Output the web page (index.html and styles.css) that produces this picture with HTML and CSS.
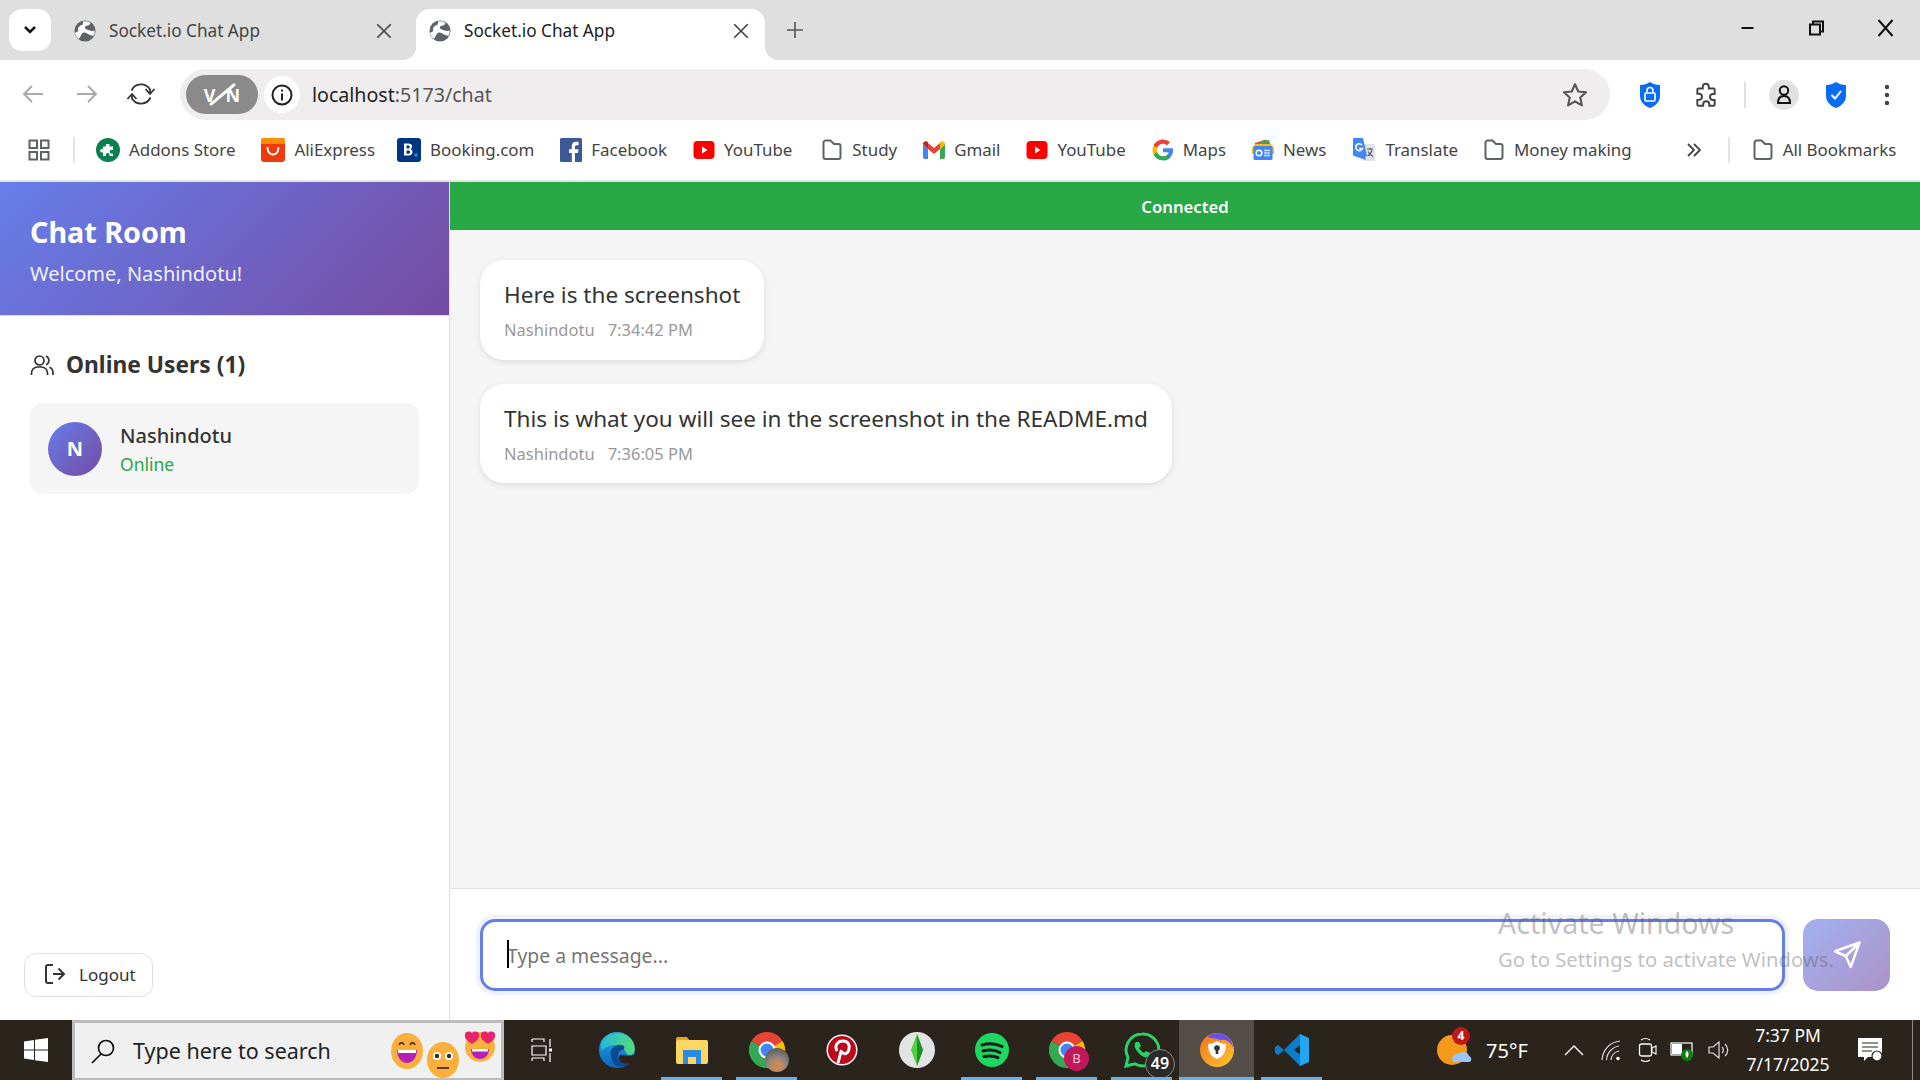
FILE: index.html
```html
<!DOCTYPE html>
<html lang="en">
<head>
<meta charset="utf-8">
<title>Socket.io Chat App</title>
<link rel="stylesheet" href="styles.css">
</head>
<body>
<svg class="defs" width="0" height="0" aria-hidden="true">
  <defs>
    <symbol id="globe" viewBox="0 0 24 24"><circle cx="12" cy="12" r="11.500" fill="#5f6368"/><path d="M10 1.500c4-.5 7 .5 8 2-1 3-5 2-6 4s3 3 5 4c2 .5 4 .5 5.500 0 0 2 0 4-1 5.500-3 1-6-2-9-3-3-1-4 1-5 3s-1 3-2.500 3.500C3 19 1.500 16.500 1 14c3-1 4-2 3.500-4S7 6 9.500 5z" fill="#fff"/></symbol>
    <symbol id="x" viewBox="0 0 16 16"><path d="M2 2l12 12M14 2L2 14" stroke="#444" stroke-width="1.500" fill="none"/></symbol>
    <symbol id="folder" viewBox="0 0 22 22"><path d="M2.500 3.500a2 2 0 0 1 2-2h5l3.500 3.500h4.500a2 2 0 0 1 2 2v11a2 2 0 0 1-2 2h-13a2 2 0 0 1-2-2z" fill="none" stroke="#5f6368" stroke-width="2"/></symbol>
    <symbol id="yt" viewBox="0 0 22 22"><rect x="0.500" y="2" width="21" height="18" rx="4" fill="#f00"/><path d="M9 7.500l5.500 3.500L9 14.500z" fill="#fff"/></symbol>
    <symbol id="chrome" viewBox="0 0 36 36"><path d="M18 18L2.400 9A18 18 0 0 1 33.600 9z" fill="#ea4335"/><path d="M18 18L33.600 9A18 18 0 0 1 18 36z" fill="#fbbc04"/><path d="M18 18L18 36A18 18 0 0 1 2.400 9z" fill="#34a853"/><circle cx="18" cy="18" r="8.500" fill="#fff"/><circle cx="18" cy="18" r="6.500" fill="#4285f4"/></symbol>
  </defs>
</svg>
<div class="browser">
  <header class="tabstrip">
    <div class="tabsearch"><svg width="14" height="10" viewBox="0 0 14 10"><path d="M2 2l5 5 5-5" stroke="#111" stroke-width="2.500" fill="none"/></svg></div>
    <div class="tab">
      <svg class="fav" width="22" height="22"><use href="#globe"/></svg>
      <span class="tabtitle">Socket.io Chat App</span>
      <svg class="tabx" width="18" height="18"><use href="#x"/></svg>
    </div>
    <div class="tab active">
      <svg class="fav" width="22" height="22"><use href="#globe"/></svg>
      <span class="tabtitle">Socket.io Chat App</span>
      <svg class="tabx" width="18" height="18"><use href="#x"/></svg>
    </div>
    <svg class="newtab" width="18" height="18" viewBox="0 0 18 18"><path d="M9 1v16M1 9h16" stroke="#555" stroke-width="1.600"/></svg>
    <div class="winctl">
      <svg width="69" height="20" viewBox="0 0 20 20"><path d="M4 10h12" stroke="#111" stroke-width="2"/></svg>
      <svg width="69" height="20" viewBox="0 0 20 20"><path d="M3.500 6.500h10v10h-10zM6.500 6.500v-3h10v10h-3" stroke="#111" stroke-width="2" fill="none"/></svg>
      <svg width="69" height="20" viewBox="0 0 20 20"><path d="M3 2l14 16M17 2L3 18" stroke="#111" stroke-width="2" fill="none"/></svg>
    </div>
  </header>

  <nav class="toolbar">
    <div class="navbtn"><svg width="24" height="24" viewBox="0 0 24 24"><path d="M22 12H3M11 4l-8 8 8 8" fill="none" stroke="#aaa" stroke-width="2"/></svg></div>
    <div class="navbtn"><svg width="24" height="24" viewBox="0 0 24 24"><path d="M2 12h19M13 4l8 8-8 8" fill="none" stroke="#aaa" stroke-width="2"/></svg></div>
    <div class="navbtn"><svg width="30" height="30" viewBox="0 0 30 30"><path d="M5.500 11.500A10.500 10.500 0 0 1 24 10.500V14M24.500 18.500A10.500 10.500 0 0 1 6 19.500V16" fill="none" stroke="#333" stroke-width="1.800"/><path d="M19.500 10l4.500 5 4.500-5M1.500 20l4.500-5 4.500 5" fill="none" stroke="#333" stroke-width="1.800"/></svg></div>
    <div class="omnibox">
      <div class="vpn"><span>V</span><span class="vpnslash"></span><span>N</span></div>
      <div class="info"><svg width="24" height="24" viewBox="0 0 24 24"><circle cx="12" cy="12" r="9.500" fill="none" stroke="#222" stroke-width="2"/><path d="M12 10.500v7M12 6.500v2" stroke="#222" stroke-width="2"/></svg></div>
      <div class="url"><span class="host">localhost</span>:5173/chat</div>
      <svg class="star" width="28" height="28" viewBox="0 0 24 24"><path d="M12 2.800l2.800 6.200 6.700.7-5 4.500 1.400 6.700-5.900-3.400-5.900 3.400 1.400-6.700-5-4.500 6.700-.7z" fill="none" stroke="#555" stroke-width="1.800" stroke-linejoin="round"/></svg>
    </div>
    <div class="exts">
      <svg class="ext-shield" width="24" height="28" viewBox="0 0 24 28"><path d="M12 1c3 2 6 3 10 3v11c0 6-5 10-10 12C7 25 2 21 2 15V4c4 0 7-1 10-3z" fill="#0a6cf5"/><rect x="7" y="12" width="10" height="8" rx="1" fill="none" stroke="#fff" stroke-width="1.600"/><path d="M9 12V9.500a3 3 0 0 1 6 0V12" fill="none" stroke="#fff" stroke-width="1.600"/></svg>
      <svg class="ext-puzzle" width="26" height="26" viewBox="0 0 24 24"><path d="M9 4.500a2.800 2.800 0 0 1 5.600 0V6H19a1 1 0 0 1 1 1v4h-1.500a2.800 2.800 0 0 0 0 5.600H20V21a1 1 0 0 1-1 1h-4v-1.500a2.800 2.800 0 0 0-5.600 0V22H5a1 1 0 0 1-1-1v-4.500h1.500a2.800 2.800 0 0 0 0-5.600H4V7a1 1 0 0 1 1-1h4z" fill="none" stroke="#444" stroke-width="1.800"/></svg>
      <span class="vsep"></span>
      <div class="profile"><svg width="16" height="20" viewBox="0 0 16 20"><circle cx="8" cy="5.500" r="4.200" fill="none" stroke="#111" stroke-width="2"/><path d="M2 18c0-5 2.500-7 6-7s6 2 6 7z" fill="none" stroke="#111" stroke-width="2"/></svg></div>
      <svg class="ext-check" width="24" height="28" viewBox="0 0 24 28"><path d="M12 1c3 2 6 3 10 3v11c0 6-5 10-10 12C7 25 2 21 2 15V4c4 0 7-1 10-3z" fill="#0a6cf5"/><path d="M7.500 14l3.500 3.500 6-7.500" fill="none" stroke="#fff" stroke-width="2"/></svg>
      <svg class="ext-menu" width="6" height="22" viewBox="0 0 6 22"><circle cx="3" cy="3" r="2.200" fill="#444"/><circle cx="3" cy="11" r="2.200" fill="#444"/><circle cx="3" cy="19" r="2.200" fill="#444"/></svg>
    </div>
  </nav>

  <div class="bookmarks">
    <svg class="apps" width="22" height="22" viewBox="0 0 22 22"><path d="M1.500 1.500h7.500v7.500H1.500zM13 1.500h7.500v7.500H13zM1.500 13h7.500v7.500H1.500zM13 13h7.500v7.500H13z" fill="none" stroke="#5f6368" stroke-width="2"/></svg>
    <span class="bsep"></span>
    <div class="bm bm-addons"><svg width="24" height="24" viewBox="0 0 24 24"><circle cx="12" cy="12" r="12" fill="#0b7f50"/><path d="M10 6h3.500v2.500H17V12h-2a1.800 1.800 0 0 0 0 3.500h2V18h-3.500v-1.500a1.800 1.800 0 0 0-3.500 0V18H7v-3.500H5.500a1.800 1.800 0 0 1 0-3.500H7V8.500h3z" fill="#fff"/></svg><span>Addons Store</span></div>
    <div class="bm bm-ali"><svg width="24" height="24" viewBox="0 0 24 24"><rect width="24" height="24" rx="3" fill="#ee3a0c"/><path d="M0 3a3 3 0 0 1 3-3h18a3 3 0 0 1 3 3v3H0z" fill="#ff8c00"/><path d="M6.500 9c0 5 2.500 7.500 5.500 7.500s5.500-2.500 5.500-7.500" fill="none" stroke="#fff" stroke-width="2"/></svg><span>AliExpress</span></div>
    <div class="bm bm-booking"><svg width="24" height="24" viewBox="0 0 24 24"><rect width="24" height="24" rx="3" fill="#003580"/><path d="M7 5.500h4.500c2.500 0 3.500 1.200 3.500 3 0 1.300-.7 2.200-1.700 2.600 1.300.4 2.200 1.400 2.200 2.900 0 2.200-1.600 3.500-4 3.500H7zm2.500 2v3h1.800c1 0 1.400-.6 1.400-1.500s-.5-1.500-1.400-1.500zm0 5v3.300h2c1.100 0 1.600-.7 1.600-1.700s-.6-1.600-1.600-1.600z" fill="#fff"/><circle cx="19" cy="17" r="1.700" fill="#09f"/></svg><span>Booking.com</span></div>
    <div class="bm bm-fb"><svg width="22" height="24" viewBox="0 0 22 24"><rect width="22" height="24" rx="1.500" fill="#3b5998"/><path d="M15 24v-9h3l.5-3.800H15V9c0-1.100.4-1.800 1.900-1.800h1.700V3.800c-.4 0-1.400-.1-2.500-.1-2.600 0-4.300 1.500-4.300 4.400v3.100H9V15h2.800v9z" fill="#fff"/></svg><span>Facebook</span></div>
    <div class="bm bm-yt1"><svg width="22" height="22"><use href="#yt"/></svg><span>YouTube</span></div>
    <div class="bm bm-study"><svg width="22" height="22"><use href="#folder"/></svg><span>Study</span></div>
    <div class="bm bm-gmail"><svg width="22" height="18" viewBox="0 0 22 18"><path d="M0 3v13a2 2 0 0 0 2 2h3V8z" fill="#4285f4"/><path d="M22 3v13a2 2 0 0 1-2 2h-3V8z" fill="#34a853"/><path d="M5 8v-6l6 5 6-5v6l-6 5z" fill="#ea4335"/><path d="M0 3c0-2.500 3-3.500 5-2v7z" fill="#c5221f"/><path d="M22 3c0-2.500-3-3.500-5-2v7z" fill="#fbbc04"/></svg><span>Gmail</span></div>
    <div class="bm bm-yt2"><svg width="22" height="22"><use href="#yt"/></svg><span>YouTube</span></div>
    <div class="bm bm-maps"><svg width="22" height="22" viewBox="0 0 24 24"><path d="M23 12.300c0-.8-.1-1.600-.2-2.300H12v4.400h6.200c-.3 1.400-1.100 2.600-2.300 3.400v2.800h3.700c2.100-2 3.400-4.900 3.400-8.300z" fill="#4285f4"/><path d="M12 23.500c3.100 0 5.700-1 7.600-2.800l-3.700-2.900c-1 .7-2.300 1.100-3.900 1.100-3 0-5.500-2-6.400-4.700H1.700V17c1.900 3.900 5.800 6.500 10.300 6.500z" fill="#34a853"/><path d="M5.600 14.200a6.900 6.900 0 0 1 0-4.400V6.900H1.700a11.500 11.500 0 0 0 0 10.200z" fill="#fbbc04"/><path d="M12 5.100c1.700 0 3.200.6 4.400 1.700l3.300-3.300A11 11 0 0 0 12 .5C7.500.5 3.600 3.100 1.700 6.900l3.900 2.900C6.500 7.100 9 5.100 12 5.100z" fill="#ea4335"/></svg><span>Maps</span></div>
    <div class="bm bm-news"><svg width="22" height="22" viewBox="0 0 22 22"><path d="M3 4l11-3.500 2 5H3z" fill="#ea4335"/><path d="M7 3l10-2 2 6H7z" fill="#34a853"/><path d="M0 9l3-4 16 0 3 4v6H0z" fill="#fbbc04"/><rect x="1.500" y="7" width="19" height="14" rx="1.500" fill="#4285f4"/><circle cx="7" cy="14" r="2.800" fill="none" stroke="#fff" stroke-width="1.500"/><path d="M12 11.500h6M12 14h6M12 16.500h6" stroke="#cfe2ff" stroke-width="1.300"/></svg><span>News</span></div>
    <div class="bm bm-translate"><svg width="24" height="24" viewBox="0 0 24 24"><rect x="11" y="6" width="12" height="17" rx="1" fill="#dfe2e6"/><path d="M15 11h6M18 10v2M20 12c-.8 3-2.500 5-4.500 6M16 13.500c1 2 3 4 5 5" fill="none" stroke="#5f6368" stroke-width="1.200"/><path d="M2 0h9l4 18-2 1 1 3-12-4a1.500 1.500 0 0 1-1-1.500V1.500A1.500 1.500 0 0 1 2 0z" fill="#4285f4"/><path d="M10 7a3.500 3.500 0 1 0 .5 3.500H7" fill="none" stroke="#fff" stroke-width="1.600"/></svg><span>Translate</span></div>
    <div class="bm bm-money"><svg width="22" height="22"><use href="#folder"/></svg><span>Money making</span></div>
    <svg class="more" width="18" height="16" viewBox="0 0 18 16"><path d="M3 2l6 6-6 6M9 2l6 6-6 6" fill="none" stroke="#444" stroke-width="1.800"/></svg>
    <span class="bsep right"></span>
    <div class="bm bm-all"><svg width="22" height="22"><use href="#folder"/></svg><span>All Bookmarks</span></div>
  </div>

  <main class="app">
    <aside class="sidebar">
      <div class="side-head">
        <h1>Chat Room</h1>
        <p>Welcome, Nashindotu!</p>
      </div>
      <section class="users">
        <h2><svg width="24" height="24" viewBox="0 0 24 24"><circle cx="9.500" cy="7.500" r="4.500" fill="none" stroke="#333" stroke-width="1.700"/><path d="M1.500 22v-2a6 6 0 0 1 6-6h4a6 6 0 0 1 6 6v2M16 3.300a4.500 4.500 0 0 1 0 8.400M19.500 14.300a6 6 0 0 1 3.500 5.700v2" fill="none" stroke="#333" stroke-width="1.700"/></svg>Online Users (1)</h2>
        <div class="user">
          <div class="avatar">N</div>
          <div class="uinfo"><div class="uname">Nashindotu</div><div class="ustatus">Online</div></div>
        </div>
      </section>
      <button class="logout"><svg width="24" height="24" viewBox="0 0 24 24"><path d="M10 3H5a2 2 0 0 0-2 2v14a2 2 0 0 0 2 2h5M10 12h11M15.500 6.500l5.500 5.500-5.500 5.500" fill="none" stroke="#333" stroke-width="2"/></svg>Logout</button>
    </aside>
    <section class="chat">
      <div class="status">Connected</div>
      <div class="messages">
        <article class="msg">
          <div class="text">Here is the screenshot</div>
          <div class="meta"><span>Nashindotu</span><span>7:34:42 PM</span></div>
        </article>
        <article class="msg">
          <div class="text">This is what you will see in the screenshot in the README.md</div>
          <div class="meta"><span>Nashindotu</span><span>7:36:05 PM</span></div>
        </article>
      </div>
      <form class="composer">
        <div class="input"><span class="caret"></span><span>Type a message...</span></div>
        <div class="send"><svg width="30" height="30" viewBox="0 0 24 24"><path d="M22 2L15 21.500 11 13 2.500 9zM22 2L11 13" fill="none" stroke="#fff" stroke-width="2" stroke-linejoin="round"/></svg></div>
      </form>
      <div class="activate"><div class="a1">Activate Windows</div><div class="a2">Go to Settings to activate Windows.</div></div>
    </section>
  </main>

  <footer class="taskbar">
    <div class="start"><svg width="24" height="24" viewBox="0 0 24 24"><path d="M0 3.500l10-1.500v9.500H0zM11 1.800L24 0v11.500H11zM0 12.500h10V22L0 20.500zM11 12.500h13V24l-13-1.800z" fill="#fff"/></svg></div>
    <div class="search">
      <svg width="26" height="26" viewBox="0 0 26 26"><circle cx="16" cy="10" r="7.500" fill="none" stroke="#111" stroke-width="1.700"/><path d="M11 16L2 25" stroke="#111" stroke-width="1.700"/></svg>
      <span class="stext">Type here to search</span>
      <div class="emojis">
        <svg class="e1" width="32" height="36" viewBox="0 0 32 36"><ellipse cx="16" cy="18" rx="16" ry="18" fill="#fbb03b"/><path d="M8 12c1-3 4-3 5 0M19 12c1-3 4-3 5 0" fill="none" stroke="#5a3a2a" stroke-width="1.800"/><path d="M6 17h20c0 8-5 13-10 13S6 25 6 17z" fill="#b81fb8"/><path d="M7 17h18v3H7z" fill="#fff"/></svg>
        <svg class="e2" width="32" height="36" viewBox="0 0 32 36"><ellipse cx="16" cy="18" rx="16" ry="18" fill="#fbb03b"/><circle cx="10" cy="14" r="4" fill="#fff"/><circle cx="22" cy="14" r="4" fill="#fff"/><circle cx="10" cy="14" r="2.200" fill="#3a2a20"/><circle cx="22" cy="14" r="2.200" fill="#3a2a20"/><path d="M10 26h12" stroke="#5a3a2a" stroke-width="2"/></svg>
        <svg class="e3" width="32" height="32" viewBox="0 0 32 32"><circle cx="16" cy="17" r="15" fill="#fbb03b"/><path d="M7 19h18c0 6-4 10-9 10s-9-4-9-10z" fill="#b81fb8"/><path d="M8 19h16v2.500H8z" fill="#fff"/><path d="M8 14C3 11 0 8 1 4c1-3 5-3 7-1 2-2 6-2 7 1 1 4-2 7-7 10zM24 14c-5-3-8-6-7-10 1-3 5-3 7-1 2-2 6-2 7 1 1 4-2 7-7 10z" fill="#e8246a"/></svg>
      </div>
    </div>
    <div class="taskview"><svg width="24" height="26" viewBox="0 0 24 24"><path d="M2 1h12v3M2 4V1M2 8h14v9H2zM2 20h12v3M2 23v-3M20 1v8M20 15v9" fill="none" stroke="#fff" stroke-width="1.200"/><rect x="19" y="10.500" width="3" height="3" fill="#fff"/></svg></div>
    <div class="task"><svg width="36" height="36" viewBox="0 0 36 36"><defs><linearGradient id="edgeA" x1="0" y1="0" x2="0" y2="1"><stop offset="0" stop-color="#22a6e6"/><stop offset="1" stop-color="#0c66b8"/></linearGradient><linearGradient id="edgeB" x1="0" y1="0" x2="1" y2="0"><stop offset="0" stop-color="#27b6dc"/><stop offset="1" stop-color="#55dd78"/></linearGradient></defs><circle cx="18" cy="18" r="18" fill="url(#edgeA)"/><path d="M2.500 9C8 0 27-3 34 10c3 6 2 13-3 13-6 0-4-10-14-10-7 0-12 3-14.500 6-1-3-1-7 0-10z" fill="url(#edgeB)"/><path d="M12 24c-2-6 3-11 9-11 4 0 5 2 4 4-2 1-6 2-6 7 0 5 6 9 11 7-5 5-13 4-15 1-2-2-2-5-3-8z" fill="#0b4a8f"/><path d="M36 22c-3 2-8 2-12 1-3-1-5 1-4 4 1 4 7 6 11 4 3-2 5-5 5-9z" fill="#2a241c"/></svg></div>
    <div class="task open"><svg width="32" height="27" viewBox="0 0 32 27"><path d="M0 2a2 2 0 0 1 2-2h9l3 4H0z" fill="#e6a51e"/><rect y="3" width="32" height="24" rx="2" fill="#fdd663"/><path d="M7 13h18v14h-5v-7h-8v7H7z" fill="#2a8ce0"/></svg></div>
    <div class="task open"><svg width="36" height="36"><use href="#chrome"/></svg><span class="badge-photo"></span></div>
    <div class="task"><svg width="32" height="32" viewBox="0 0 32 32"><circle cx="16" cy="16" r="15.500" fill="#fff"/><circle cx="16" cy="16" r="14" fill="#bd081c"/><path d="M12 29c1-4 2-8 3.500-13M11 17c-3-6 1-10 6-10s7 4 6 8c-1 5-5 6-7 3" fill="none" stroke="#fff" stroke-width="3"/></svg></div>
    <div class="task"><svg width="36" height="36" viewBox="0 0 36 36"><circle cx="18" cy="18" r="18" fill="#e3e3e3"/><path d="M18 2l6 16-6 16-6-16z" fill="#4fd03e"/><path d="M18 2v32l6-16z" fill="#1f8d2a"/></svg></div>
    <div class="task open"><svg width="34" height="34" viewBox="0 0 34 34"><circle cx="17" cy="17" r="17" fill="#1ed760"/><path d="M7 12c7-2 14-1.500 20 1.500M8 18c6-1.500 12-1 17 1.500M9 23.500c5-1 10-.8 14 1.200" fill="none" stroke="#1b1b1b" stroke-width="3" stroke-linecap="round"/></svg></div>
    <div class="task open"><svg width="36" height="36"><use href="#chrome"/></svg><span class="badge-b">B</span></div>
    <div class="task open"><svg width="36" height="36" viewBox="0 0 36 36"><path d="M18 2a16 16 0 0 0-14 23.500L2 34l8.700-2.200A16 16 0 1 0 18 2z" fill="#2a241c" stroke="#25d366" stroke-width="3"/><path d="M12 10c-2 2-2 5 1 9s7 7 10 6 3-3 3-4l-4-2-2 2c-2-1-4-3-5-5l2-2-2-4z" fill="#25d366"/></svg><span class="badge-49">49</span></div>
    <div class="task open current"><svg width="34" height="34" viewBox="0 0 34 34"><defs><linearGradient id="braveA" x1="0" y1="0" x2="1" y2="1"><stop offset="0" stop-color="#f5701a"/><stop offset="1" stop-color="#fdc830"/></linearGradient></defs><circle cx="17" cy="17" r="17" fill="url(#braveA)"/><path d="M7 4c7-6 19-5 24 4 1 2 2 4 2 6-3-5-7-8-12-7z" fill="#6a4ff0"/><path d="M17 8c3 2 6 3 9 3 0 8-3 13-9 15-6-2-9-7-9-15 3 0 6-1 9-3z" fill="#fff"/><circle cx="17" cy="15" r="2.800" fill="#333"/><rect x="15.700" y="15" width="2.600" height="6" fill="#333"/></svg></div>
    <div class="task open"><svg width="36" height="34" viewBox="0 0 36 34"><path d="M26 1L10 17 4 12 1 14v6l3 2 6-5 16 16 3-2V24l-9-7 9-7V3z" fill="#0b7bcb"/><path d="M26 1l9 4v24l-9 4 0-7V8z" fill="#22a7f0"/></svg></div>
    <div class="tray">
      <div class="weather"><svg width="36" height="40" viewBox="0 0 36 40"><circle cx="15" cy="20" r="15" fill="#f49a1a"/><path d="M15 30c0-5 4-7 7-6 2-3 9-3 10 2 3 1 3 6 0 6H18c-2 0-3-1-3-2z" fill="#9cc4f4"/></svg><span class="wbadge">4</span></div>
      <span class="temp">75°F</span>
      <div class="ticon"><svg width="20" height="12" viewBox="0 0 20 12"><path d="M1 11l9-9 9 9" fill="none" stroke="#fff" stroke-width="1.400"/></svg></div>
      <div class="ticon wifi"><svg width="22" height="22" viewBox="0 0 22 22"><path d="M1 21A20 20 0 0 1 19 2M5.500 21A15 15 0 0 1 18 7M10 21a10 10 0 0 1 8-9" fill="none" stroke="#ddd" stroke-width="1.200"/><circle cx="17" cy="19.500" r="1.800" fill="#fff"/></svg></div>
      <div class="ticon"><svg width="20" height="26" viewBox="0 0 20 26"><rect x="1.500" y="7" width="12" height="12" rx="2" fill="none" stroke="#fff" stroke-width="1.300"/><path d="M14 11l4-2v8l-4-2zM3 3a8 8 0 0 1 9 0M3 23a8 8 0 0 0 9 0" fill="none" stroke="#fff" stroke-width="1.100"/></svg></div>
      <div class="ticon"><svg width="26" height="24" viewBox="0 0 26 24"><rect x="1" y="5" width="21" height="12" fill="#2a241c" stroke="#fff" stroke-width="1.200"/><rect x="2" y="6" width="10" height="10" fill="#fff"/><circle cx="17" cy="17" r="6" fill="#107c10"/><path d="M17 13c2 1 2 5 0 7-2-2-2-6 0-7z" fill="#fff"/></svg></div>
      <div class="ticon"><svg width="24" height="24" viewBox="0 0 24 24"><path d="M2 9h4l6-5v16l-6-5H2zM15 9a4 4 0 0 1 0 6M18 6a8 8 0 0 1 0 12" fill="none" stroke="#ddd" stroke-width="1.200"/></svg></div>
      <div class="clock"><div>7:37 PM</div><div>7/17/2025</div></div>
      <div class="notif"><svg width="26" height="26" viewBox="0 0 26 26"><path d="M1 1h24v19H11l-4 4v-4H1z" fill="#fff"/><path d="M5 6h16M5 10h16M5 14h10" stroke="#2a241c" stroke-width="1.200"/><circle cx="20" cy="19" r="5" fill="#fff" stroke="#2a241c" stroke-width="1.200"/></svg></div>
      <span class="showdesk"></span>
    </div>
  </footer>
</div>
</body>
</html>
```
FILE: styles.css
```css
* { box-sizing: border-box; }
html, body { margin: 0; height: 100%; overflow: hidden; }
body { font-family: "Noto Sans", "Open Sans", sans-serif; color: #333; background: #fff; }
.defs { position: absolute; }
h1, h2, p { margin: 0; }
.browser { width: 1920px; height: 1080px; display: flex; flex-direction: column; }

/* tab strip */
.tabstrip { height: 60px; background: #dfdfdf; display: flex; align-items: flex-start; padding: 9px 0 0 9px; flex: none; }
.tabsearch { width: 42px; height: 42px; background: #fff; border-radius: 13px; display: flex; align-items: center; justify-content: center; }
.tab { width: 365px; height: 51px; display: flex; align-items: center; padding: 0 23px 0 23px; font-size: 17.200px; color: #444; position: relative; }
.tab .fav { flex: none; margin-right: 13px; margin-top: -8px; }
.tab .tabtitle { flex: 1; margin-top: -8px; }
.tab .tabx { margin-top: -8px; }
.tab.active { width: 349px; background: #fff; border-radius: 14px 14px 0 0; color: #222; padding: 0 15px 0 13px; }
.tab.active .fav { margin-right: 13px; }
.tab.active::before, .tab.active::after { content: ""; position: absolute; bottom: 0; width: 14px; height: 14px; }
.tab.active::before { left: -14px; background: radial-gradient(circle at 0 0, transparent 14px, #fff 14.500px); }
.tab.active::after { right: -14px; background: radial-gradient(circle at 100% 0, transparent 14px, #fff 14.500px); }
.newtab { margin: 12px 0 0 21px; }
.winctl { margin-left: auto; display: flex; margin-top: 9px; }

/* toolbar */
.toolbar { height: 60px; background: #fff; display: flex; align-items: center; padding: 0 0 0 6px; flex: none; border-radius: 14px 14px 0 0; }
.navbtn { width: 54px; height: 54px; display: flex; align-items: center; justify-content: center; margin-top: 8px; }
.omnibox { width: 1430px; height: 51px; margin: 9px 0 0 12px; background: #efedee; border-radius: 26px; display: flex; align-items: center; padding: 0 21px 0 6px; }
.vpn { width: 72px; height: 39px; border-radius: 20px; background: #8a8a8a; color: #fff; display: flex; align-items: center; justify-content: center; gap: 10px; font-size: 18px; font-weight: 700; position: relative; }
.vpnslash { position: absolute; left: 35px; top: 3px; width: 3px; height: 33px; background: #fff; border-radius: 2px; transform: rotate(50deg); }
.info { width: 36px; height: 37px; border-radius: 50%; background: #fff; display: flex; align-items: center; justify-content: center; margin-left: 6px; flex: none; }
.url { margin-left: 12px; font-size: 19.600px; color: #555; flex: 1; }
.host { color: #1f1f1f; }
.exts { display: flex; align-items: center; margin-top: 9px; margin-left: 28px; }
.ext-puzzle { margin-left: 31px; }
.vsep { width: 2px; height: 26px; background: #e0e0e0; margin: 0 23px 0 25px; }
.profile { width: 30px; height: 30px; border-radius: 50%; background: #e2e2e2; display: flex; align-items: center; justify-content: center; }
.ext-check { margin-left: 25px; }
.ext-menu { margin-left: 36px; }

/* bookmarks */
.bookmarks { height: 62px; background: #fff; display: flex; align-items: center; padding: 0 0 1px 28px; font-size: 16.900px; color: #444; border-bottom: 2px solid #e3e3e3; flex: none; }
.apps { flex: none; }
.bsep { width: 2px; height: 26px; background: #e4e4e4; margin: 0 21px 0 23px; flex: none; }
.bm { display: flex; align-items: center; gap: 9px; white-space: nowrap; margin-right: 26px; flex: none; }
.bm svg { flex: none; }
.bm-ali { margin-right: 22px; }
.bm-yt1 { margin-right: 29px; }
.bm-translate { margin-right: 25px; }
.more { margin-left: 27px; flex: none; }
.bsep.right { margin: 0 22px 0 25px; }
.bm-all { margin-right: 0; }

/* app */
.app { flex: 1; display: flex; min-height: 0; }
.sidebar { width: 450px; flex: none; border-right: 1px solid #e0e0e0; display: flex; flex-direction: column; }
.side-head { height: 134px; padding: 23px 30px 0; background: linear-gradient(135deg, #667eea 0%, #764ba2 100%); color: #fff; border-bottom: 1px solid #e0e0e0; }
.side-head h1 { font-size: 28.700px; font-weight: 700; line-height: 54px; }
.side-head p { font-size: 20px; line-height: 24px; opacity: .9; margin-top: 3px; }
.users { padding: 34px 30px 0; flex: 1; }
.users h2 { display: flex; align-items: center; gap: 12px; font-size: 22.800px; font-weight: 700; line-height: 30px; margin-bottom: 23px; }
.user { height: 91px; display: flex; align-items: center; gap: 18px; padding: 0 18px; background: #f5f5f5; border-radius: 13px; }
.avatar { width: 54px; height: 54px; border-radius: 50%; background: linear-gradient(135deg, #667eea, #764ba2); color: #fff; font-weight: 700; font-size: 20px; display: flex; align-items: center; justify-content: center; }
.uinfo { padding-top: 2px; }
.uname { font-size: 20px; font-weight: 500; line-height: 28px; }
.ustatus { font-size: 17.500px; color: #28a745; line-height: 28px; }
.logout { align-self: flex-start; margin: 0 0 23px 24px; width: 129px; height: 44px; background: #fff; border: 1px solid #e0e0e0; border-radius: 12px; font: inherit; font-size: 17px; color: #333; display: flex; align-items: center; gap: 12px; padding: 0 0 2px 18px; }

.chat { flex: 1; display: flex; flex-direction: column; position: relative; min-width: 0; }
.status { height: 48px; background: #28a745; color: #fff; font-size: 16.700px; font-weight: 600; display: flex; align-items: center; justify-content: center; flex: none; }
.messages { flex: 1; background: #f5f5f5; padding: 30px; display: flex; flex-direction: column; align-items: flex-start; gap: 24px; }
.msg { background: #fff; border-radius: 24px; padding: 20px 24px 0; box-shadow: 0 2px 6px rgba(0,0,0,.1); height: 99.500px; }
.text { font-size: 22.550px; line-height: 30px; color: #333; }
.meta { display: flex; gap: 13px; font-size: 16.500px; color: #999; margin-top: 9px; line-height: 22px; }
.composer { height: 132px; flex: none; background: #fff; border-top: 1px solid #e0e0e0; padding: 30px 30px 0; display: flex; gap: 18px; align-items: flex-start; }
.input { flex: 1; height: 72px; border: 3px solid #667eea; border-radius: 15px; box-shadow: 0 0 0 4px rgba(102,126,234,.1); display: flex; align-items: center; padding-left: 24px; font-size: 19.400px; color: #757575; position: relative; }
.caret { position: absolute; left: 24px; top: 18px; width: 2px; height: 28px; background: #000; }
.send { width: 87px; height: 72px; border-radius: 15px; background: linear-gradient(135deg, #667eea, #764ba2); opacity: .6; display: flex; align-items: center; justify-content: center; flex: none; }
.activate { position: absolute; left: 1048px; top: 721px; color: rgba(90,90,90,.4); white-space: nowrap; }
.a1 { font-size: 28.600px; line-height: 40px; }
.a2 { font-size: 20.300px; line-height: 32px; }

/* taskbar */
.taskbar { height: 60px; background: #2a241c; display: flex; align-items: stretch; flex: none; color: #fff; }
.start { width: 72px; display: flex; align-items: center; justify-content: center; }
.search { width: 432px; background: #f0f0f0; border: 3px solid #bcbcbc; border-bottom-width: 2px; display: flex; align-items: center; padding-left: 15px; color: #222; position: relative; }
.stext { font-size: 21.500px; margin-left: 17px; }
.emojis { position: absolute; left: 316px; top: 0; width: 110px; height: 55px; }
.emojis svg { position: absolute; }
.e1 { left: 0; top: 10px; } .e2 { left: 36px; top: 19px; } .e3 { left: 72px; top: 7px; width: 34px; }
.taskview { width: 75px; display: flex; align-items: center; justify-content: center; }
.task { width: 75px; display: flex; align-items: center; justify-content: center; position: relative; }
.task.open::after { content: ""; position: absolute; left: 7px; right: 7px; bottom: 0; height: 3px; background: #6cb0e8; }
.task.current { background: #544e48; }
.task.current::after { left: 0; right: 0; }
.badge-photo { position: absolute; left: 36px; top: 28px; width: 24px; height: 24px; border-radius: 50%; background: radial-gradient(circle at 50% 75%, #c98a5a 0 20%, #8a8480 45%, #4a4642 100%); }
.badge-b { position: absolute; left: 35px; top: 26px; width: 25px; height: 25px; border-radius: 50%; background: #c2185b; font-size: 13px; text-align: center; line-height: 25px; color: #f0c0d0; }
.badge-49 { position: absolute; left: 41px; top: 29px; width: 30px; height: 30px; border-radius: 50%; background: #2a2a2a; border: 1px solid #8a8a8a; font-size: 16px; font-weight: 600; text-align: center; line-height: 27px; color: #fff; }
.tray { margin-left: auto; display: flex; align-items: center; width: 584px; padding-left: 101px; }
.weather { position: relative; width: 38px; flex: none; display: flex; }
.wbadge { position: absolute; left: 15px; top: -3px; width: 18px; height: 18px; border-radius: 50%; background: #c01818; font-size: 12px; font-weight: 700; text-align: center; line-height: 18px; }
.temp { font-size: 20px; width: 70px; margin-left: 11px; flex: none; }
.ticon { width: 35.500px; display: flex; align-items: center; justify-content: center; flex: none; }
.ticon.wifi { margin-left: 3px; }
.clock { width: 103px; text-align: center; font-size: 17.500px; line-height: 29px; flex: none; }
.notif { width: 60px; display: flex; justify-content: center; flex: none; }
.showdesk { width: 1px; height: 60px; background: #8a8a8a; margin-left: 12px; flex: none; }
```
